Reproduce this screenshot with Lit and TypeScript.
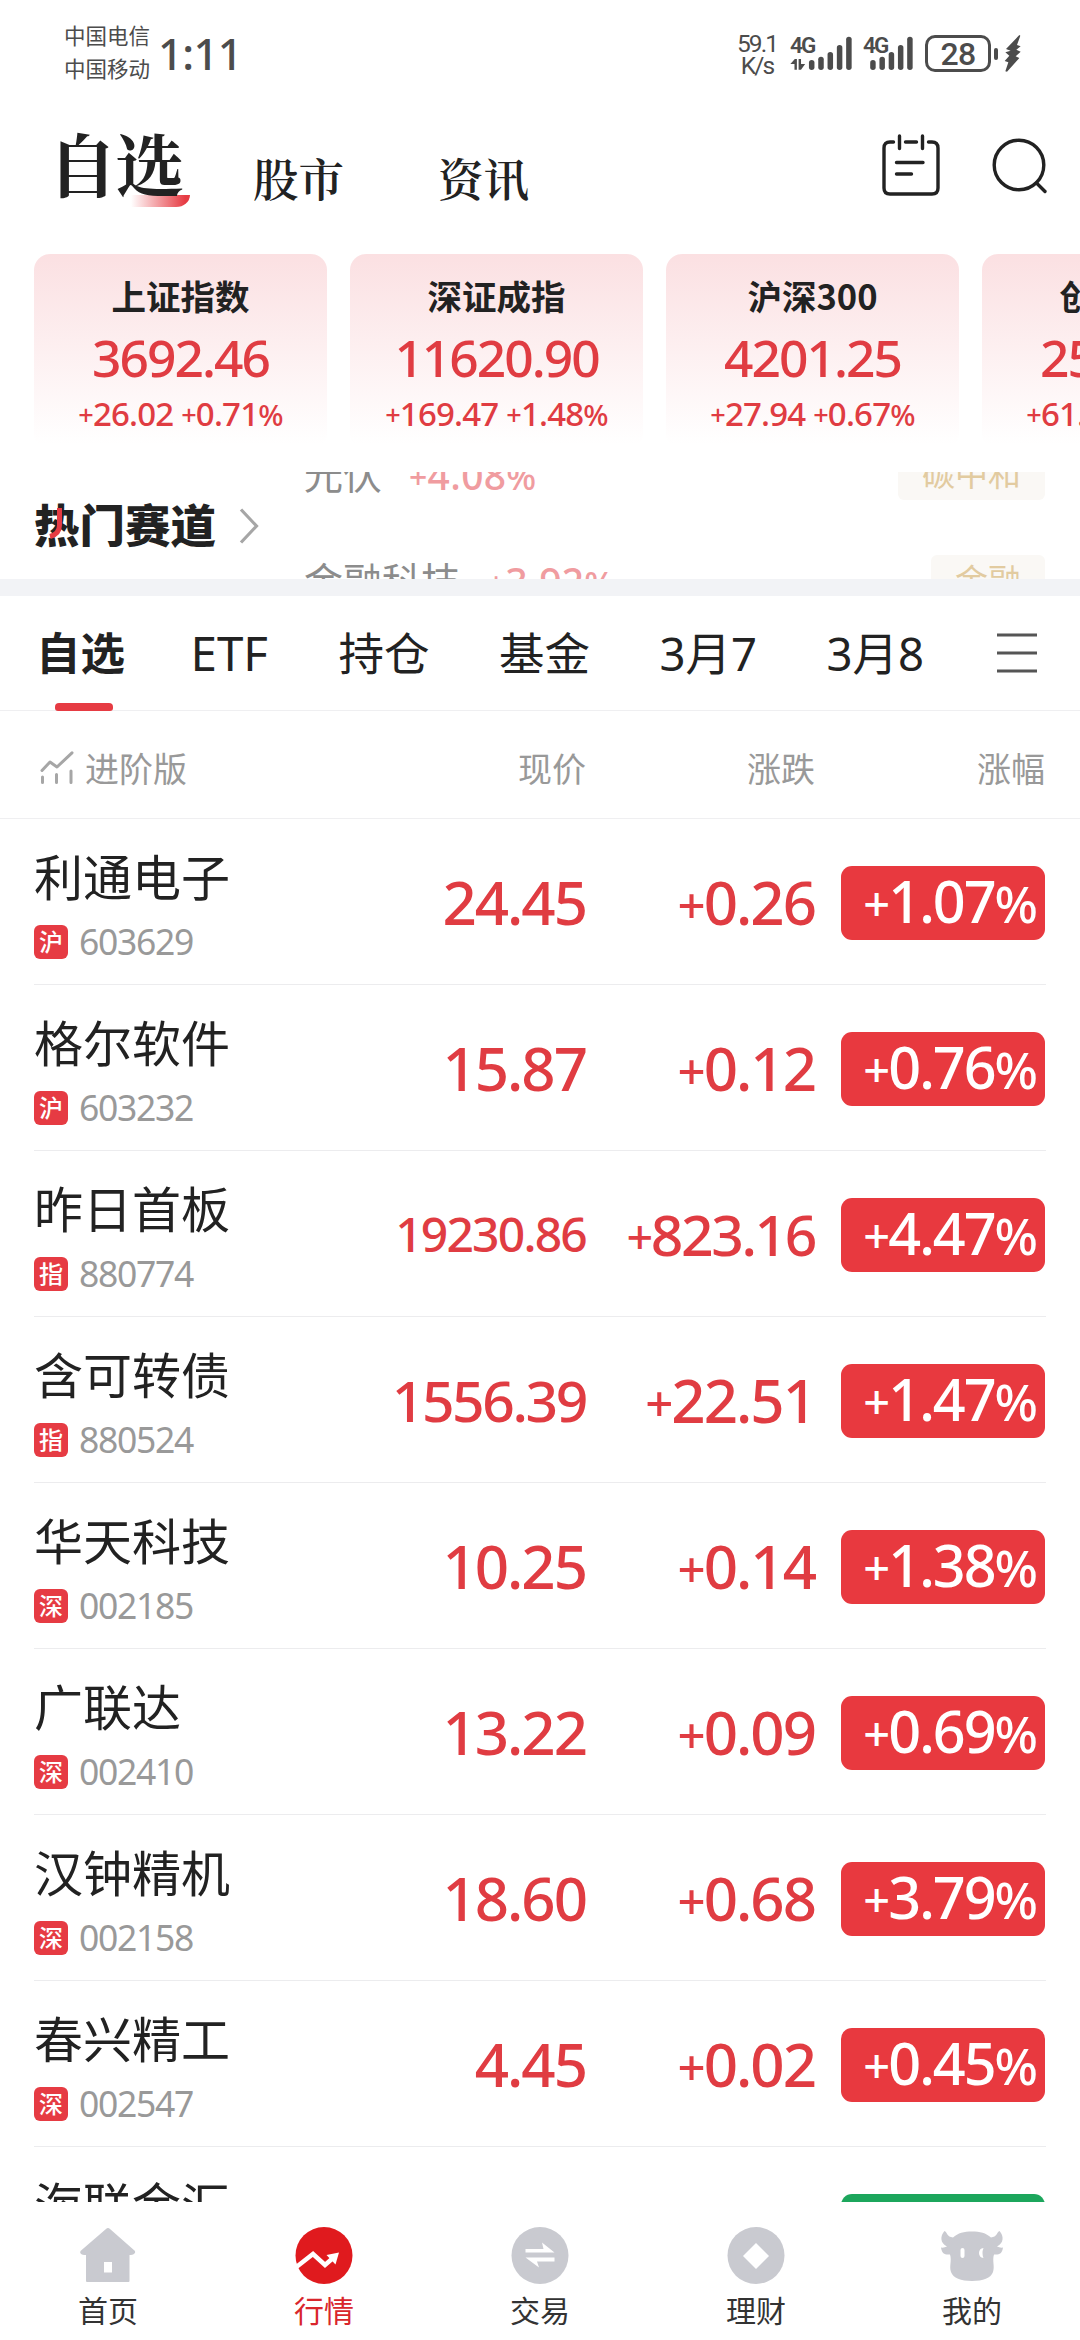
import { LitElement, html, css, svg } from "lit";
import { customElement, property } from "lit/decorators.js";
import { classMap } from "lit/directives/class-map.js";

interface Quote {
  name: string;
  market: string;
  code: string;
  price: string;
  change: string;
  pct: string;
  priceSize?: string;
  changeSize?: string;
  down?: boolean;
}

const INDICES = [
  { name: "上证指数", value: "3692.46", change: "+26.02 +0.71%" },
  { name: "深证成指", value: "11620.90", change: "+169.47 +1.48%" },
  { name: "沪深300", value: "4201.25", change: "+27.94 +0.67%" },
  { name: "创业板指", value: "2534.22", change: "+61.47 +2.48%" },
];

const TRACKS = [
  { name: "光伏", pct: "+4.08%", tag: "碳中和" },
  { name: "金融科技", pct: "+3.92%", tag: "金融" },
];

const TABS = ["自选", "ETF", "持仓", "基金", "3月7", "3月8"];

const QUOTES: Quote[] = [
  { name: "利通电子", market: "沪", code: "603629", price: "24.45", change: "+0.26", pct: "+1.07%" },
  { name: "格尔软件", market: "沪", code: "603232", price: "15.87", change: "+0.12", pct: "+0.76%" },
  { name: "昨日首板", market: "指", code: "880774", price: "19230.86", change: "+823.16", pct: "+4.47%", priceSize: "small", changeSize: "mid" },
  { name: "含可转债", market: "指", code: "880524", price: "1556.39", change: "+22.51", pct: "+1.47%", priceSize: "mid" },
  { name: "华天科技", market: "深", code: "002185", price: "10.25", change: "+0.14", pct: "+1.38%" },
  { name: "广联达", market: "深", code: "002410", price: "13.22", change: "+0.09", pct: "+0.69%" },
  { name: "汉钟精机", market: "深", code: "002158", price: "18.60", change: "+0.68", pct: "+3.79%" },
  { name: "春兴精工", market: "深", code: "002547", price: "4.45", change: "+0.02", pct: "+0.45%" },
  { name: "海联金汇", market: "深", code: "002537", price: "7.86", change: "-0.05", pct: "-0.63%", down: true },
];

/* Plus and percent signs are drawn narrower than the digits. */
const num = (text: string) =>
  [...text].map((c) =>
    c === "+" ? html`<span class="plus">+</span>` : c === "%" ? html`<span class="percent">%</span>` : c
  );

const numStyles = css`
  .plus {
    font-size: 0.82em;
    line-height: 0;
    vertical-align: 0.045em;
  }
  .percent {
    font-size: 0.9em;
    line-height: 0;
  }
`;

@customElement("status-bar")
class StatusBar extends LitElement {
  static styles = css`
    :host {
      display: flex;
      height: 112px;
      padding: 0 59px 0 64px;
      color: #4c4c4c;
      justify-content: space-between;
      align-items: flex-start;
    }
    .left,
    .right {
      display: flex;
      align-items: flex-start;
    }
    .carriers {
      font-size: 21.5px;
      line-height: 33px;
      padding-top: 18px;
      white-space: nowrap;
    }
    .time {
      font: 500 43.5px/50px "Noto Sans", sans-serif;
      letter-spacing: -0.6px;
      margin: 28px 0 0 8px;
    }
    .speed {
      font: 24.5px/22px Roboto, sans-serif;
      letter-spacing: -1.9px;
      padding-top: 33px;
      margin-right: 2px;
      width: 40px;
      text-align: center;
      white-space: nowrap;
    }
    .signal {
      position: relative;
      margin: 35px 0 0 11px;
    }
    .gen {
      position: absolute;
      left: 0;
      top: 0;
      font: 600 22.5px/20px Roboto, sans-serif;
      letter-spacing: -1.8px;
    }
    svg {
      display: block;
    }
    .battery {
      box-sizing: border-box;
      width: 66px;
      height: 37px;
      border: 3px solid #4c4c4c;
      border-radius: 10px;
      margin: 35px 0 0 12px;
      font: 500 32px/32px Roboto, sans-serif;
      text-align: center;
      letter-spacing: -0.8px;
    }
    .nub {
      width: 4px;
      height: 12px;
      border-radius: 2px;
      background: #4c4c4c;
      margin: 48px 0 0 3px;
    }
    .bolt {
      margin: 35px 0 0 6px;
    }
  `;

  private bars(x0: number) {
    const tops = [180, 170, 156, 135, 110];
    return tops.map(
      (t, i) => svg`<rect x=${x0 + i * 27 - 8} y=${t} width="16" height=${210 - t} rx="8" ry="8"></rect>`
    );
  }

  render() {
    return html`
      <div class="left">
        <div class="carriers"><div>中国电信</div><div>中国移动</div></div>
        <div class="time">1:11</div>
      </div>
      <div class="right">
        <div class="speed"><div>59.1</div><div>K/s</div></div>
        <div class="signal">
          <span class="gen">4G</span>
          <svg width="62" height="36" viewBox="720 105 180 108" preserveAspectRatio="none" fill="#4c4c4c">
            ${this.bars(783)}
            <path d="M721 192 L734 177 H740 V209 H733 V192Z M745 177 H752 V192 H764 L752 209 H745Z"></path>
          </svg>
        </div>
        <div class="signal">
          <span class="gen">4G</span>
          <svg width="50" height="36" viewBox="935 105 146 108" preserveAspectRatio="none" fill="#4c4c4c">
            ${this.bars(964)}
          </svg>
        </div>
        <div class="battery">28</div>
        <div class="nub"></div>
        <svg class="bolt" width="17" height="37" viewBox="1346 104 51 111" preserveAspectRatio="none" fill="#4c4c4c">
          <path d="M1392 104 L1352 146 L1366 151 L1350 156 L1362 166 L1348 182 L1359 186 L1350 213 L1355 214 L1392 173 L1381 168 L1396 154 L1383 148 L1396 138 L1385 134 L1395 106Z"></path>
        </svg>
      </div>
    `;
  }
}

@customElement("title-bar")
class TitleBar extends LitElement {
  static styles = css`
    :host {
      display: flex;
      height: 142px;
      padding: 0 32px 0 48px;
      align-items: flex-start;
      color: #222;
      font-family: "Noto Serif CJK SC", "Noto Serif SC", "Source Han Serif SC", "Songti SC", serif;
      font-weight: 600;
    }
    .active {
      position: relative;
      width: 136px;
      font-size: 69px;
      line-height: 80px;
      letter-spacing: -2px;
      margin-top: 11px;
      font-weight: 700;
      white-space: nowrap;
    }
    .active span {
      position: relative;
    }
    .swoosh {
      position: absolute;
      left: 83px;
      top: 72px;
      width: 59px;
      height: 12px;
      border-radius: 0 0 14px 0 / 0 0 12px 0;
      background: linear-gradient(90deg, #fff, #e63b43 92%);
    }
    .item {
      font-size: 45.5px;
      line-height: 60px;
      margin-top: 36px;
    }
    .i1 {
      margin-left: 69px;
    }
    .i2 {
      margin-left: 94px;
    }
    .spacer {
      flex: 1;
    }
    .cal {
      margin: 22px 52px 0 0;
    }
    .search {
      margin-top: 26px;
    }
  `;
  render() {
    return html`
      <div class="active"><i class="swoosh"></i><span>自选</span></div>
      <div class="item i1">股市</div>
      <div class="item i2">资讯</div>
      <div class="spacer"></div>
      <svg class="cal" width="58" height="62" viewBox="0 0 58 62" fill="none" stroke="#222" stroke-width="3.4" stroke-linecap="round">
        <path d="M11.500 8 H8 Q2 8 2 14 V54 Q2 60 8 60 H50 Q56 60 56 54 V14 Q56 8 50 8 H46.500 M23.500 8 H34.500"></path>
        <path d="M17.500 2 V14.500 M40.500 2 V14.500 M14.500 28.500 H41 M14.500 40 H29.500"></path>
      </svg>
      <svg class="search" width="56" height="58" viewBox="0 0 56 58" fill="none" stroke="#222" stroke-width="3.400" stroke-linecap="round">
        <circle cx="27" cy="27" r="24.800"></circle>
        <path d="M44.500 45 L53 53.500"></path>
      </svg>
    `;
  }
}

@customElement("index-strip")
class IndexStrip extends LitElement {
  static styles = [
    numStyles,
    css`
      :host {
        display: flex;
        gap: 23px;
        height: 218px;
        padding-left: 34px;
        overflow: hidden;
      }
      .card {
        flex: none;
        box-sizing: border-box;
        width: 293px;
        height: 196px;
        padding-top: 21px;
        border-radius: 16px;
        background: linear-gradient(180deg, #fbe0e2, #fff 97%);
        text-align: center;
        white-space: nowrap;
        color: #e03c42;
      }
      .name {
        font-size: 34.5px;
        line-height: 40px;
        font-weight: 700;
        color: #222;
      }
      .value {
        font-family: "Noto Sans", sans-serif;
        font-size: 51.5px;
        line-height: 60px;
        font-weight: 500;
        margin-top: 12px;
        letter-spacing: -2px;
      }
      .change {
        font-family: "Noto Sans", sans-serif;
        font-size: 33px;
        line-height: 36px;
        font-weight: 500;
        margin-top: 9px;
        letter-spacing: -0.8px;
      }
    `,
  ];
  render() {
    return INDICES.map(
      (i) => html`<div class="card">
        <div class="name">${i.name}</div>
        <div class="value">${i.value}</div>
        <div class="change">${num(i.change)}</div>
      </div>`
    );
  }
}

@customElement("hot-tracks")
class HotTracks extends LitElement {
  static styles = [
    numStyles,
    css`
      :host {
        display: flex;
        height: 107px;
        overflow: hidden;
        padding: 0 35px 0 34px;
        border-bottom: 17px solid #f2f3f6;
      }
      .head {
        display: flex;
        align-items: center;
        width: 270px;
        height: 107px;
      }
      .label {
        position: relative;
        font-size: 45.5px;
        line-height: 60px;
        font-weight: 900;
        color: #222;
        white-space: nowrap;
        margin-top: -6px;
      }
      .flame {
        position: absolute;
        left: 15px;
        top: 14px;
      }
      .chev {
        margin: 1px 0 0 23px;
      }
      .list {
        flex: 1;
        margin-top: -50px;
      }
      .track {
        display: flex;
        align-items: center;
        height: 107px;
        white-space: nowrap;
      }
      .name {
        font-size: 39px;
        line-height: 52px;
        color: #8c8c8c;
        margin-top: -7px;
      }
      .pct {
        flex: 1;
        font-family: "Noto Sans", sans-serif;
        font-size: 39px;
        line-height: 52px;
        font-weight: 500;
        letter-spacing: 0.3px;
        margin: -1px 0 0 27px;
        color: #f09ca0;
      }
      .tag {
        font-size: 33px;
        line-height: 49px;
        height: 52px;
        padding: 0 24px;
        border-radius: 6px;
        margin-top: -3px;
        color: #e2cba0;
        background: #faf8f5;
      }
    `,
  ];
  render() {
    return html`
      <div class="head">
        <div class="label">
          热门赛道
          <svg class="flame" width="14" height="34" viewBox="0 0 14 34" fill="none" stroke="#e63b43" stroke-width="5">
            <path d="M10.500 1 V18 Q10.500 27 1 29.500"></path>
          </svg>
        </div>
        <svg class="chev" width="20" height="36" viewBox="0 0 20 36" fill="none" stroke="#a6a6a6" stroke-width="3.200">
          <path d="M2 1.500 L17.500 18 L2 34.500"></path>
        </svg>
      </div>
      <div class="list">
        ${TRACKS.map(
          (t) => html`<div class="track">
            <span class="name">${t.name}</span>
            <span class="pct">${num(t.pct)}</span>
            <span class="tag">${t.tag}</span>
          </div>`
        )}
      </div>
    `;
  }
}

@customElement("group-tabs")
class GroupTabs extends LitElement {
  static styles = css`
    :host {
      display: flex;
      box-sizing: border-box;
      height: 115px;
      padding: 0 43px 0 36px;
      gap: 69.5px;
      border-bottom: 1px solid #efeff1;
      align-items: flex-start;
      color: #222;
    }
    .tab {
      position: relative;
      font-family: "Noto Sans", "Noto Sans CJK SC", sans-serif;
      font-size: 45.5px;
      line-height: 60px;
      padding-top: 27px;
      height: 88px;
      white-space: nowrap;
    }
    .tab:nth-child(2) {
      font-size: 47.5px;
      margin: 0 1px 0 -4px;
    }
    .tab.on {
      font-weight: 700;
      font-size: 44.5px;
    }
    .tab.on::after {
      content: "";
      position: absolute;
      left: 19px;
      top: 107px;
      width: 58px;
      height: 8px;
      border-radius: 4px 4px 3px 3px;
      background: #e63b43;
    }
    svg {
      display: block;
      margin: 36px 0 0 auto;
    }
  `;
  render() {
    return html`
      ${TABS.map((t, i) => html`<div class=${classMap({ tab: true, on: i === 0 })}>${t}</div>`)}
      <svg width="40" height="42" viewBox="0 0 40 42" stroke="#555" stroke-width="3">
        <path d="M0 3 H40 M0 21 H40 M0 39 H40"></path>
      </svg>
    `;
  }
}

@customElement("quote-table")
class QuoteTable extends LitElement {
  static styles = [
    numStyles,
    css`
      :host {
        display: block;
        flex: 1;
        min-height: 0;
        overflow: hidden;
      }
      .head,
      .row {
        display: grid;
        grid-template-columns: 200px 352px 229px 26px 204px;
        padding: 0 35px 0 34px;
        box-sizing: border-box;
        white-space: nowrap;
      }
      .head {
        height: 108px;
        border-bottom: 1px solid #efeff1;
        color: #999;
        font-size: 34px;
        line-height: 114px;
        text-align: right;
      }
      .mode {
        display: flex;
        align-items: center;
        gap: 11px;
        padding-left: 6px;
        height: 114px;
      }
      .pctHead {
        grid-column: 5;
      }
      .row {
        height: 166px;
        position: relative;
      }
      .row::after {
        content: "";
        position: absolute;
        left: 34px;
        right: 34px;
        bottom: 0;
        height: 1px;
        background: #ececee;
      }
      .name {
        font-size: 49px;
        line-height: 56px;
        margin-top: 28px;
        color: #222;
      }
      .meta {
        display: flex;
        align-items: center;
        gap: 11px;
        height: 34px;
        margin-top: 22px;
      }
      .market {
        width: 34px;
        height: 34px;
        border-radius: 6px;
        background: #e63b43;
        color: #fff;
        font-size: 24px;
        line-height: 31px;
        font-weight: 500;
        text-align: center;
      }
      .code {
        font-family: "Noto Sans", sans-serif;
        font-size: 35.5px;
        line-height: 34px;
        margin-top: -2px;
        color: #999;
        letter-spacing: -1.3px;
      }
      .n {
        font-family: "Noto Sans", sans-serif;
        font-size: 60px;
        line-height: 80px;
        padding-top: 43px;
        text-align: right;
        font-weight: 500;
        color: #e03c42;
        letter-spacing: -2px;
      }
      .n.mid {
        font-size: 57px;
        letter-spacing: -2.4px;
      }
      .n.small {
        font-size: 48px;
        letter-spacing: -1.8px;
        padding-top: 43px;
      }
      .badge {
        grid-column: 5;
        box-sizing: border-box;
        height: 74px;
        margin-top: 47px;
        padding-right: 9px;
        border-radius: 11px;
        background: #e8393f;
        color: #fff;
        font-family: "Noto Sans", sans-serif;
        font-size: 57.5px;
        line-height: 71px;
        font-weight: 500;
        text-align: right;
        letter-spacing: -2px;
      }
      .badge.down {
        background: #1ca65c;
      }
      .badge .plus {
        font-size: 47px;
      }
      .badge .percent {
        font-size: 51px;
      }
    `,
  ];
  render() {
    return html`
      <div class="head">
        <div class="mode">
          <svg width="34" height="34" viewBox="0 0 34 34" fill="none" stroke="#a6a6a6" stroke-width="3" stroke-linecap="round" stroke-linejoin="round">
            <path d="M2 19.500 L10 11 L17 16 L32 1.800 M2.500 26 V31.500 M16.500 23.500 V31.500 M31 20 V31.500"></path>
          </svg>
          <span>进阶版</span>
        </div>
        <div>现价</div>
        <div>涨跌</div>
        <div class="pctHead">涨幅</div>
      </div>
      ${QUOTES.map(
        (q) => html`<div class="row">
          <div>
            <div class="name">${q.name}</div>
            <div class="meta"><span class="market">${q.market}</span><span class="code">${q.code}</span></div>
          </div>
          <div class="n ${q.priceSize ?? ""}">${q.price}</div>
          <div class="n ${q.changeSize ?? ""}">${num(q.change)}</div>
          <div class=${classMap({ badge: true, down: !!q.down })}>${num(q.pct)}</div>
        </div>`
      )}
    `;
  }
}

const ICONS: Record<string, unknown> = {
  首页: svg`<path d="M32 4 Q33 4 34 5 L59 27 Q60 30 55 31 H53.500 V57 Q53.500 58 52.500 58 H11 Q10 58 10 57 V31 H8 Q3 30 4.500 27 L30 5 Q31 4 32 4Z M28 38 V48.500 H36 V38Z" fill-rule="evenodd"></path>`,
  行情: svg`<circle cx="32" cy="31.500" r="28.500"></circle><path d="M5 42.500 L21 30 L33 41 L41 34" fill="none" stroke="#fff" stroke-width="4.500"></path><path d="M47 28.500 L34.500 31 L43.500 40.500Z" fill="#fff"></path>`,
  交易: svg`<circle cx="32" cy="31.500" r="28.500"></circle><path d="M17.500 25 H35.500 L34 18.500 L46.500 28.500 H17.500Z M46.500 33.500 V37.500 H29 L31 43.500 L17.500 33.500Z" fill="#fff"></path>`,
  理财: svg`<circle cx="32" cy="31.500" r="28.500"></circle><path d="M32 19 L45 32 L32 45 L19 32Z" fill="#fff"></path>`,
  我的: svg`<path d="M4.500 7 C7 8 7 13 13 13.500 C18 9 24 7.500 32 7.500 C40 7.500 46 9 51 13.500 C57 13 57 8 59.500 7 C64 12 64 19 57 22.500 Q60 24 63 23.500 C62 30 59 31 54 30.500 C52 37 55 42 53 48 C51 54 43 57 32 57 C21 57 13 54 11 48 C9 42 12 37 10 30.500 C5 31 2 30 1 23.500 Q4 24 7 22.500 C0 19 0 12 4.500 7Z"></path><rect x="20.500" y="24" width="4" height="10" rx="2" fill="#fff"></rect><path d="M43.500 24 C37.500 24 37.500 34 43.500 34 Q41.500 29 43.500 24Z" fill="#fff"></path>`,
};

@customElement("bottom-nav")
class BottomNav extends LitElement {
  @property() active = "行情";
  static styles = css`
    :host {
      display: grid;
      grid-template-columns: repeat(5, 1fr);
      height: 138px;
      background: #fff;
    }
    .item {
      display: flex;
      flex-direction: column;
      align-items: center;
      padding-top: 22px;
      font-size: 30px;
      line-height: 40px;
      color: #333;
    }
    .item.on {
      color: #d9262c;
    }
    svg {
      display: block;
      fill: #c9cad0;
      margin-bottom: 1px;
    }
    .on svg {
      fill: #e01a1e;
    }
  `;
  render() {
    return Object.keys(ICONS).map(
      (k) => html`<div class=${classMap({ item: true, on: k === this.active })}>
        <svg width="64" height="64" viewBox="0 0 64 64">${ICONS[k]}</svg>
        <span>${k}</span>
      </div>`
    );
  }
}

@customElement("app-root")
class AppRoot extends LitElement {
  static styles = css`
    :host {
      display: flex;
      flex-direction: column;
      width: 1080px;
      height: 2340px;
      overflow: hidden;
      background: #fff;
      font-family: "Noto Sans CJK SC", sans-serif;
    }
  `;
  render() {
    return html`
      <status-bar></status-bar>
      <title-bar></title-bar>
      <index-strip></index-strip>
      <hot-tracks></hot-tracks>
      <group-tabs></group-tabs>
      <quote-table></quote-table>
      <bottom-nav></bottom-nav>
    `;
  }
}
